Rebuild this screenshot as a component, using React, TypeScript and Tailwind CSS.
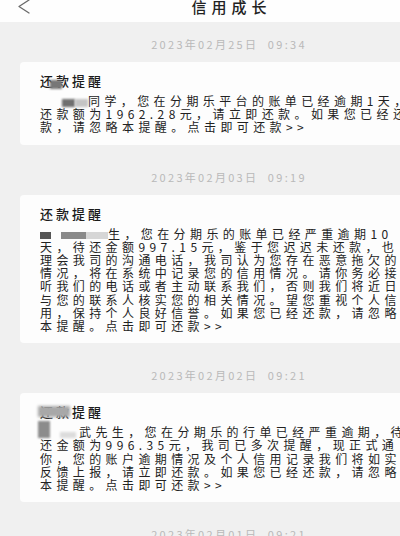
import React from "react";

const body =
  "font-['Noto_Sans_CJK_SC',sans-serif] text-[12px] leading-[13.2px] tracking-[4.4px] text-[#222]";

function DateRow({ text, first }: { text: string; first?: boolean }) {
  return (
    <div
      className={`${first ? "pt-[15px]" : "pt-[25px]"} pb-[11px] text-center font-['Noto_Sans_CJK_SC',sans-serif] text-[11px] leading-[14px] tracking-[2.3px] text-[#b9b9b9] whitespace-pre`}
    >
      {text}
    </div>
  );
}

function Card({
  title,
  lines,
}: {
  title: React.ReactNode;
  lines: React.ReactNode[];
}) {
  return (
    <div className="mx-[20px] rounded-[4px] bg-[#fdfdfd] px-[20px] pt-[12px] pb-[11px]">
      <div className="relative font-['Noto_Sans_CJK_SC',sans-serif] text-[13px] font-medium leading-[14px] tracking-[3px] text-[#1a1a1a] whitespace-nowrap">
        {title}
      </div>
      <div className={`mt-[6px] ${body}`}>
        {lines.map((l, i) => (
          <div key={i} className="relative whitespace-nowrap">
            {l}
          </div>
        ))}
      </div>
    </div>
  );
}

export default function App() {
  return (
    <div className="h-[536px] w-[400px] overflow-hidden bg-[#f0f0f0]">
      <div className="w-[458px]">
        {/* header */}
        <div className="relative h-[22px] bg-[#fefefe]">
          <svg
            className="absolute left-[17px] top-[-1px]"
            width="14"
            height="16"
            viewBox="0 0 14 16"
            fill="none"
          >
            <polyline
              points="12,1 2,7.5 12,14"
              stroke="#6a6a6a"
              strokeWidth="1.3"
              strokeLinecap="round"
              strokeLinejoin="round"
            />
          </svg>
          <div className="text-center font-['Noto_Sans_CJK_SC',sans-serif] text-[15px] font-medium leading-[14px] tracking-[5px] text-[#222] pl-[5px]">
            信用成长
          </div>
        </div>

        <DateRow first text={"2023年02月25日  09:34"} />
        <Card
          title={
            <>
              还款提醒
              <span className="absolute left-[10px] top-[6px] h-[9px] w-[12px] bg-[#777] blur-[1px]" />
            </>
          }
          lines={[
            <>
              <span className="inline-block w-[22px]" />
              <span className="inline-block h-[8px] w-[13px] bg-[#6f6f6f] align-middle blur-[0.8px]" />
              <span className="inline-block h-[8px] w-[13px] bg-[#c4c4c4] align-middle blur-[0.8px]" />
              同学，您在分期乐平台的账单已经逾期1天，待
            </>,
            <>还款额为1962.28元，请立即还款。如果您已经还</>,
            <>款，请忽略本提醒。点击即可还款&gt;&gt;</>,
          ]}
        />

        <DateRow text={"2023年02月03日  09:19"} />
        <Card
          title={<>还款提醒</>}
          lines={[
            <>
              <span className="inline-block h-[7px] w-[11px] bg-[#555] align-middle blur-[0.6px]" />
              <span className="inline-block w-[10px]" />
              <span className="inline-block h-[7px] w-[25px] bg-[#8a8a8a] align-middle blur-[0.6px]" />
              <span className="inline-block h-[7px] w-[22px] bg-[#d6d6d6] align-middle blur-[0.6px]" />
              生，您在分期乐的账单已经严重逾期10
            </>,
            <>天，待还金额997.15元，鉴于您迟迟未还款，也</>,
            <>理会我司的沟通电话，我司认为您存在恶意拖欠的</>,
            <>情况，将在系统中记录您的信用情况。请你务必接</>,
            <>听我们的电话或者主动联系我们，否则我们将近日</>,
            <>与您的联系人核实您的相关情况。望您重视个人信</>,
            <>用，保持个人良好信誉。如果您已经还款，请忽略</>,
            <>本提醒。点击即可还款&gt;&gt;</>,
          ]}
        />

        <DateRow text={"2023年02月02日  09:21"} />
        <Card
          title={
            <>
              还款提醒
              <span className="absolute left-[-2px] top-[1px] h-[11px] w-[32px] bg-[#a8a8a8] blur-[1.5px]" />
            </>
          }
          lines={[
            <>
              <span className="absolute left-[-2px] top-[-4px] h-[17px] w-[12px] bg-[#8c8c8c] blur-[1px]" />
              <span className="inline-block w-[20px]" />
              <span className="inline-block h-[6px] w-[16px] bg-[#dcdcdc] align-bottom blur-[1px]" />
              <span className="inline-block w-[3px]" />
              武先生，您在分期乐的行单已经严重逾期，待
            </>,
            <>还金额为996.35元，我司已多次提醒，现正式通</>,
            <>你，您的账户逾期情况及个人信用记录我们将如实</>,
            <>反馈上报，请立即还款。如果您已经还款，请忽略</>,
            <>本提醒。点击即可还款&gt;&gt;</>,
          ]}
        />

        <DateRow text={"2023年02月01日  09:21"} />
      </div>
    </div>
  );
}
